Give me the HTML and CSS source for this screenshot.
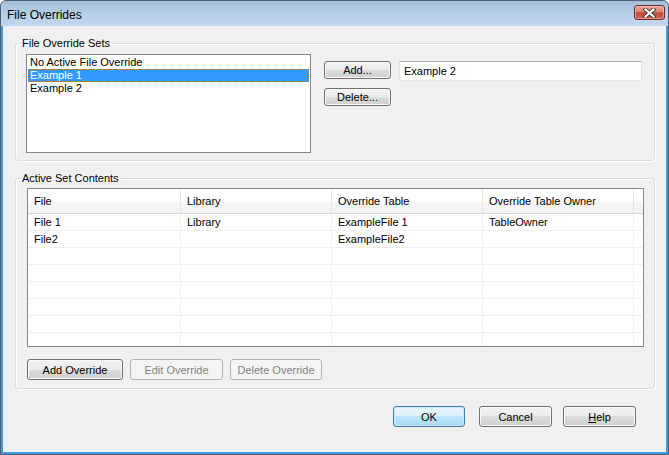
FILE: index.html
```html
<!DOCTYPE html>
<html lang="en">
<head>
    <meta charset="UTF-8">
    <meta name="viewport" content="width=device-width, initial-scale=1.0">
    <title>File Overrides</title>
    <link rel="stylesheet" href="styles.css">
</head>
<body>
    <div class="window">
        <div class="titlebar">
            <span class="title">File Overrides</span>
            <button class="close-btn" aria-label="Close">
                <svg width="13" height="10" viewBox="0 0 13 10">
                    <path d="M2.5 1.5 L10.5 8.5 M10.5 1.5 L2.5 8.5" stroke="#3a3a3a" stroke-width="4" stroke-linecap="square"/>
                    <path d="M2.5 1.5 L10.5 8.5 M10.5 1.5 L2.5 8.5" stroke="#fff" stroke-width="2.2" stroke-linecap="square"/>
                </svg>
            </button>
        </div>
        <div class="client">
            <fieldset class="group group-sets">
                <legend>File Override Sets</legend>
                <div class="sets-row">
                    <div class="listbox">
                        <div class="list-item">No Active File Override</div>
                        <div class="list-item selected">Example 1</div>
                        <div class="list-item">Example 2</div>
                    </div>
                    <div class="set-buttons">
                        <button class="btn btn-set">Add...</button>
                        <button class="btn btn-set">Delete...</button>
                    </div>
                    <input class="textbox" type="text" value="Example 2">
                </div>
            </fieldset>

            <fieldset class="group group-contents">
                <legend>Active Set Contents</legend>
                <div class="listview">
                    <div class="lv-row lv-header">
                        <div class="lv-cell">File</div>
                        <div class="lv-cell">Library</div>
                        <div class="lv-cell">Override Table</div>
                        <div class="lv-cell">Override Table Owner</div>
                        <div class="lv-cell lv-fill"></div>
                    </div>
                    <div class="lv-row">
                        <div class="lv-cell">File 1</div>
                        <div class="lv-cell">Library</div>
                        <div class="lv-cell">ExampleFile 1</div>
                        <div class="lv-cell">TableOwner</div>
                        <div class="lv-cell lv-fill"></div>
                    </div>
                    <div class="lv-row">
                        <div class="lv-cell">File2</div>
                        <div class="lv-cell"></div>
                        <div class="lv-cell">ExampleFile2</div>
                        <div class="lv-cell"></div>
                        <div class="lv-cell lv-fill"></div>
                    </div>
                    <div class="lv-row"><div class="lv-cell"></div><div class="lv-cell"></div><div class="lv-cell"></div><div class="lv-cell"></div><div class="lv-cell lv-fill"></div></div>
                    <div class="lv-row"><div class="lv-cell"></div><div class="lv-cell"></div><div class="lv-cell"></div><div class="lv-cell"></div><div class="lv-cell lv-fill"></div></div>
                    <div class="lv-row"><div class="lv-cell"></div><div class="lv-cell"></div><div class="lv-cell"></div><div class="lv-cell"></div><div class="lv-cell lv-fill"></div></div>
                    <div class="lv-row"><div class="lv-cell"></div><div class="lv-cell"></div><div class="lv-cell"></div><div class="lv-cell"></div><div class="lv-cell lv-fill"></div></div>
                    <div class="lv-row"><div class="lv-cell"></div><div class="lv-cell"></div><div class="lv-cell"></div><div class="lv-cell"></div><div class="lv-cell lv-fill"></div></div>
                    <div class="lv-row"><div class="lv-cell"></div><div class="lv-cell"></div><div class="lv-cell"></div><div class="lv-cell"></div><div class="lv-cell lv-fill"></div></div>
                </div>
                <div class="override-buttons">
                    <button class="btn btn-add-override">Add Override</button>
                    <button class="btn btn-edit-override" disabled>Edit Override</button>
                    <button class="btn btn-delete-override" disabled>Delete Override</button>
                </div>
            </fieldset>

            <div class="dialog-buttons">
                <button class="btn btn-dialog btn-default">OK</button>
                <button class="btn btn-dialog btn-cancel">Cancel</button>
                <button class="btn btn-dialog btn-help"><u>H</u>elp</button>
            </div>
        </div>
    </div>
</body>
</html>
```

FILE: styles.css
```css
* {
    box-sizing: border-box;
}
body {
    margin: 0;
    font-family: "Liberation Sans", Arial, sans-serif;
    font-size: 11px;
    color: #000;
    background: #fff;
}
.window {
    width: 669px;
    height: 455px;
    border: 1px solid #4c5f73;
    border-radius: 6px 6px 0 0;
    background: #3d9be4;
    display: flex;
    flex-direction: column;
    overflow: hidden;
}
.titlebar {
    height: 25px;
    flex: none;
    display: flex;
    align-items: center;
    justify-content: space-between;
    padding: 0 3px 0 6px;
    background: linear-gradient(#a4bcd7, #b9d0e9 55%, #c2d7ee);
}
.title {
    font-size: 12px;
    margin-top: 2px;
}
.close-btn {
    width: 31px;
    height: 15px;
    margin-top: -2px;
    padding: 0;
    border: 1px solid #6e2b24;
    border-radius: 3px;
    background: linear-gradient(#eaaa9e, #da8275 45%, #c4483a 52%, #cc6352);
    box-shadow: inset 0 0 0 1px rgba(255, 210, 200, 0.5);
    display: flex;
    align-items: center;
    justify-content: center;
}
.client {
    flex: 1;
    margin: 0 2px 2px 2px;
    background: #f0f0f0;
    padding: 11px 11px 0 12px;
}

/* group boxes */
.group {
    margin: 0;
    min-width: 0;
    border: 1px solid #d5dfe5;
    border-radius: 3px;
    box-shadow: inset 1px 1px 0 #fff, 1px 1px 0 #fff;
}
.group legend {
    padding: 0 2px;
    line-height: 13px;
}
.group-sets {
    padding: 4px 10px 7px 10px;
}
.group-sets legend {
    margin-left: -6px;
}
.group-contents {
    margin-top: 11px;
    padding: 3px 10px 8px 11px;
}
.group-contents legend {
    margin-left: -7px;
}

/* override sets */
.sets-row {
    display: flex;
    align-items: flex-start;
}
.listbox {
    width: 285px;
    height: 99px;
    border: 1px solid #828790;
    background: #fff;
    padding: 1px;
}
.list-item {
    height: 13px;
    line-height: 13px;
    padding-left: 2px;
    white-space: nowrap;
}
.list-item.selected {
    background: #3399ff;
    color: #fff;
    outline: 1px dotted #c07830;
    outline-offset: -1px;
}
.set-buttons {
    display: flex;
    flex-direction: column;
    gap: 9px;
    margin: 7px 0 0 13px;
}
.textbox {
    width: 243px;
    height: 20px;
    margin: 7px 0 0 8px;
    padding: 0 0 0 4px;
    font: inherit;
    color: #000;
    border: 1px solid #e2e3ea;
    border-top-color: #abadb3;
    border-bottom-color: #e3e9ef;
    background: #fff;
    outline: none;
}

/* list view */
.listview {
    width: 617px;
    height: 159px;
    border: 1px solid #828790;
    background: #fff;
    overflow: hidden;
}
.lv-row {
    display: grid;
    grid-template-columns: 153px 151px 151px 151px 1fr;
    height: 17px;
}
.lv-cell {
    border-right: 1px solid #f0f0f0;
    border-bottom: 1px solid #f0f0f0;
    padding-left: 6px;
    line-height: 16px;
    white-space: nowrap;
    overflow: hidden;
}
.lv-fill {
    border-right: none;
}
.lv-header {
    height: 25px;
    background: linear-gradient(#fff 0%, #fff 45%, #f4f5f7 55%, #f1f2f4 100%);
}
.lv-header .lv-cell {
    line-height: 25px;
    border-right: 1px solid #e3e5e8;
    border-bottom: 1px solid #d5d5d5;
}
.lv-header .lv-fill {
    border-right: none;
}

/* buttons */
.btn {
    font: inherit;
    color: #000;
    padding: 0;
    border: 1px solid #707070;
    border-radius: 3px;
    background: linear-gradient(#f2f2f2 0%, #ebebeb 50%, #dddddd 50%, #cfcfcf 100%);
    box-shadow: inset 0 0 0 1px #fbfbfb;
}
.btn:disabled {
    color: #838383;
    border-color: #adb2b5;
    background: #f4f4f4;
    box-shadow: none;
}
.btn-set {
    width: 67px;
    height: 18px;
}
.override-buttons {
    display: flex;
    gap: 7px;
    margin-top: 12px;
}
.override-buttons .btn {
    height: 21px;
}
.btn-add-override {
    width: 96px;
}
.btn-edit-override {
    width: 93px;
}
.btn-delete-override {
    width: 92px;
}
.dialog-buttons {
    display: flex;
    justify-content: flex-end;
    margin: 17px 19px 0 0;
}
.btn-dialog {
    width: 73px;
    height: 21px;
}
.btn-default {
    width: 72px;
    border-color: #3c7fb1;
    background: linear-gradient(#eaf6fd 0%, #d9f0fc 50%, #bee6fd 50%, #a7d9f5 100%);
    box-shadow: inset 0 0 0 1px #cbe9f9;
}
.btn-cancel {
    margin-left: 14px;
}
.btn-help {
    margin-left: 11px;
}
```
